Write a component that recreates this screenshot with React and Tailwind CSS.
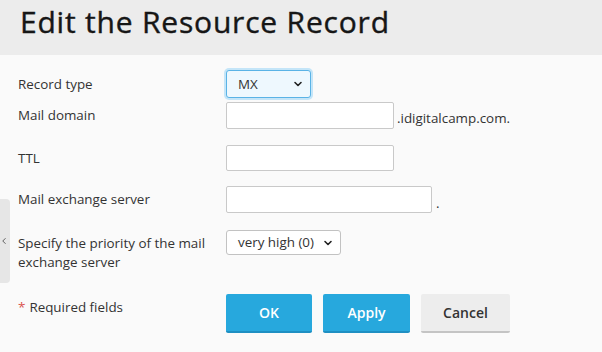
import React from "react";
import { ChevronDown, ChevronLeft } from "lucide-react";

const font = { fontFamily: '"Open Sans", "Noto Sans", sans-serif' };

const Label = ({ children, className = "" }) => (
  <div className={"w-[208px] shrink-0 text-[13.4px] leading-[19px] text-[#333] " + className}>
    {children}
  </div>
);

const FakeSelect = ({ value, className = "" }) => (
  <div
    className={
      "flex items-center justify-between rounded-[3px] border pl-[11px] pr-[6px] text-[13.4px] text-[#333] " +
      className
    }
  >
    <span>{value}</span>
    <ChevronDown size={12} strokeWidth={3.2} className="text-[#222]" />
  </div>
);

const TextBox = ({ className = "" }) => (
  <div className={"rounded-[2px] border border-[#c9c9c9] bg-white " + className} />
);

export default function App() {
  return (
    <div className="relative h-[352px] w-[602px] overflow-hidden bg-[#fafafa]" style={font}>
      {/* header */}
      <div className="h-[55px] bg-[#ececec] pl-[20px] pt-[2px]">
        <h1 className="text-[30px] leading-[40px] tracking-[0.8px] text-[#161616] [-webkit-text-stroke:0.4px_#161616]">
          Edit the Resource Record
        </h1>
      </div>

      {/* side drawer handle */}
      <div className="absolute left-0 top-[199px] flex h-[84px] w-[10px] items-center rounded-r-[4px] bg-[#e6e6e6]">
        <ChevronLeft size={10} strokeWidth={2} className="-ml-[1px] text-[#444]" />
      </div>

      {/* form */}
      <div className="pl-[18px] pt-[15px]">
        <div className="flex h-[28px] items-center">
          <Label>Record type</Label>
          <FakeSelect
            value="MX"
            className="h-[28px] w-[85px] border-[#5ab3e6] bg-[#eef8fe] ring-2 ring-[#c4e5f8]"
          />
        </div>

        <div className="mt-[4px] flex h-[27px] items-center">
          <Label>Mail domain</Label>
          <TextBox className="h-[27px] w-[168px]" />
          <span className="ml-[3px] mt-[5px] text-[13.4px] text-[#333]">.idigitalcamp.com.</span>
        </div>

        <div className="mt-[16px] flex h-[26px] items-center">
          <Label>TTL</Label>
          <TextBox className="h-[26px] w-[168px]" />
        </div>

        <div className="mt-[15px] flex h-[27px] items-center">
          <Label>Mail exchange server</Label>
          <TextBox className="h-[27px] w-[206px]" />
          <span className="ml-[4px] mt-[8px] text-[13.4px] text-[#333]">.</span>
        </div>

        <div className="mt-[17px] flex items-start">
          <Label className="pt-[4px]">
            Specify the priority of the mail
            <br />
            exchange server
          </Label>
          <FakeSelect
            value="very high (0)"
            className="h-[25px] w-[115px] border-[#c2c2c2] bg-white"
          />
        </div>

        <div className="mt-[22px] flex items-start">
          <Label className="pt-[4px]">
            <span className="mr-[4px] text-[#d9534f]">*</span>Required fields
          </Label>
          <div className="flex gap-[11px]">
            <button className="h-[39px] w-[86px] rounded-[2px] border-b-2 border-[#1f8fc2] bg-[#27a8dd] text-[14px] font-semibold text-white">
              OK
            </button>
            <button className="h-[39px] w-[87px] rounded-[2px] border-b-2 border-[#1f8fc2] bg-[#27a8dd] text-[14px] font-semibold text-white">
              Apply
            </button>
            <button className="h-[39px] w-[89px] rounded-[2px] border-b-2 border-[#c4c4c4] bg-[#ededed] text-[14px] font-semibold text-[#333]">
              Cancel
            </button>
          </div>
        </div>
      </div>
    </div>
  );
}
